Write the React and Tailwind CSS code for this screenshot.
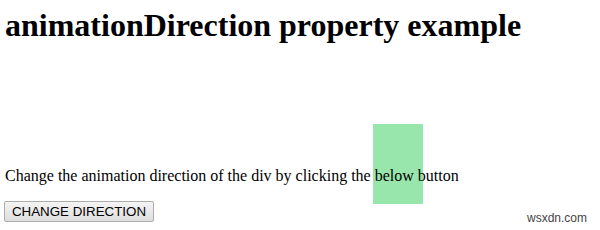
import React from 'react';

const serif = { fontFamily: '"Liberation Serif", "Times New Roman", serif' };
const sans = { fontFamily: '"Liberation Sans", Arial, sans-serif' };

export default function App() {
  return (
    <div className="relative w-[600px] h-[230px] bg-white text-black overflow-hidden" style={serif}>
      <div className="pl-[5px]">
        <h1 className="pt-[7px] text-[32px] leading-[37px] font-bold">animationDirection property example</h1>

        <p className="relative z-10 mt-[123px] text-[16px] leading-[18px]">
          Change the animation direction of the div by clicking the below button
        </p>

        <button
          className="mt-[16px] -ml-[1px] w-[150px] h-[21px] border border-[#adadad] bg-gradient-to-b from-[#f4f4f4] to-[#dedede] text-[13.33px] leading-none text-black rounded-[2px]"
          style={sans}
        >
          CHANGE DIRECTION
        </button>
      </div>

      {/* the animated div, caught mid-move */}
      <div className="absolute left-[373px] top-[124px] w-[50px] h-[80px] bg-[#98e6ab]" />

      <span className="absolute left-[527px] top-[212px] text-[12px] leading-none text-[#444]" style={sans}>
        wsxdn.com
      </span>
    </div>
  );
}
